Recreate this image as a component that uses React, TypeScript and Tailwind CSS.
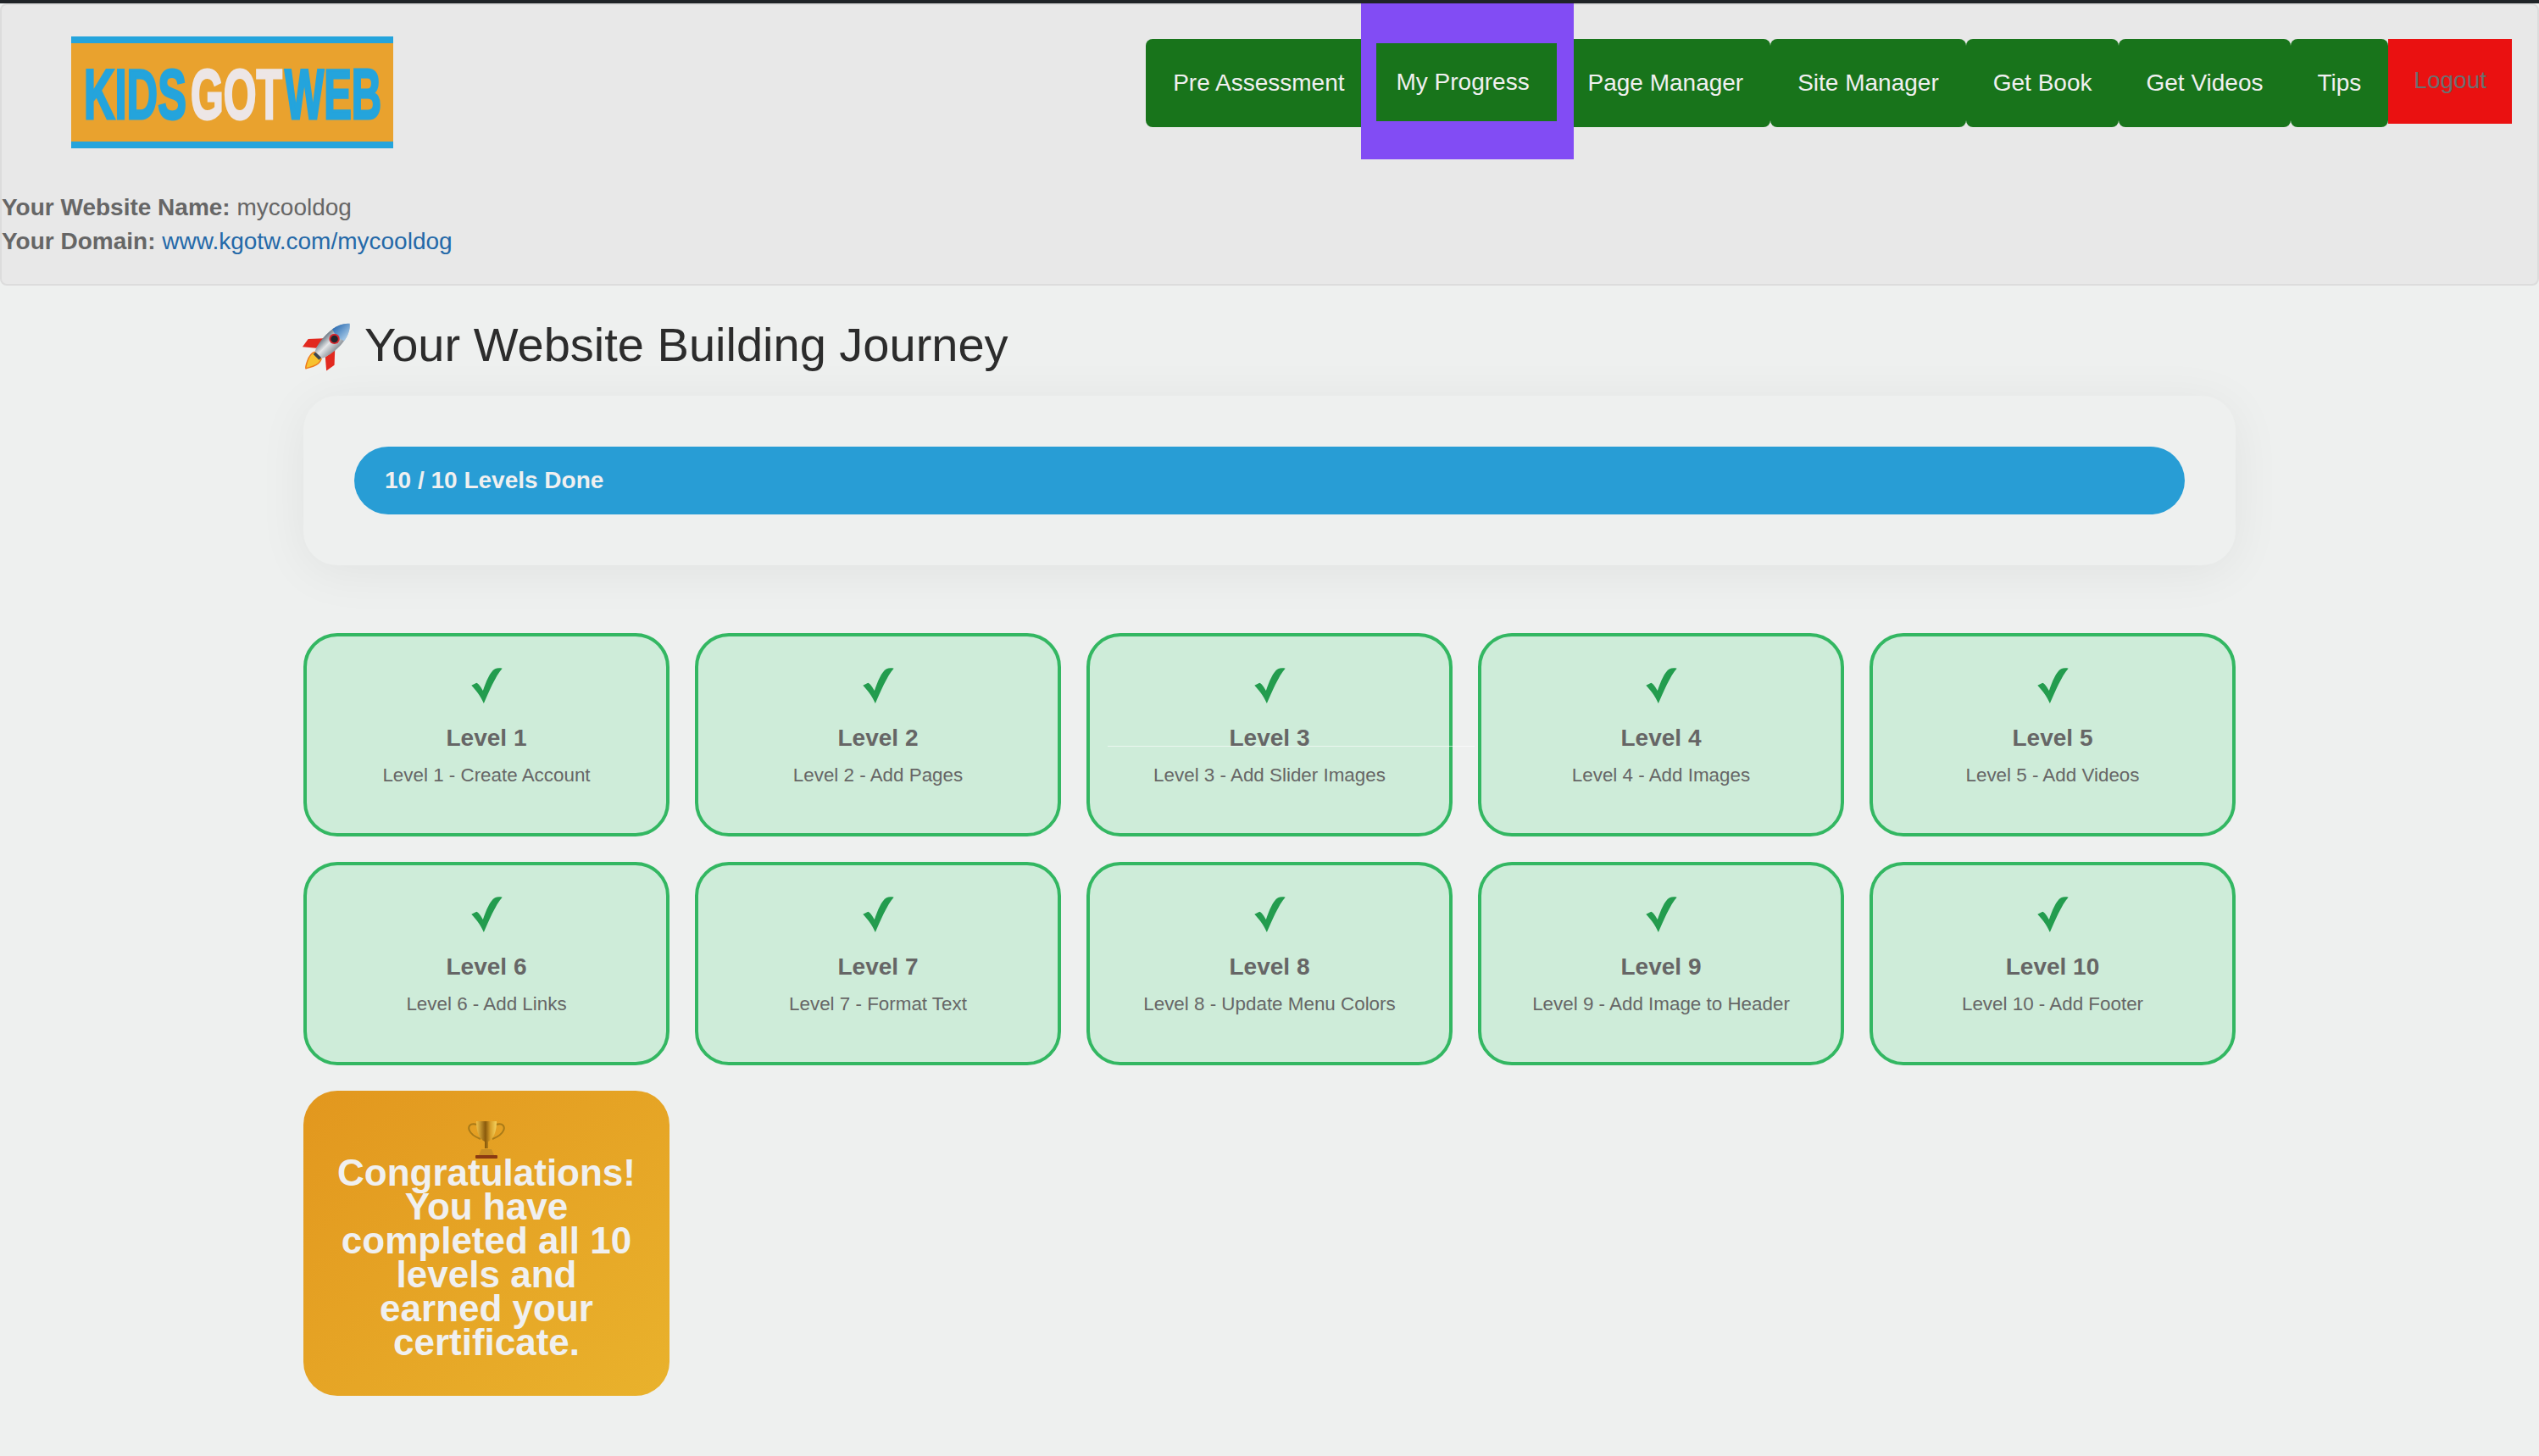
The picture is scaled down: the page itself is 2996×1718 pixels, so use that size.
import React from 'react';

const levels = [
  'Level 1 - Create Account',
  'Level 2 - Add Pages',
  'Level 3 - Add Slider Images',
  'Level 4 - Add Images',
  'Level 5 - Add Videos',
  'Level 6 - Add Links',
  'Level 7 - Format Text',
  'Level 8 - Update Menu Colors',
  'Level 9 - Add Image to Header',
  'Level 10 - Add Footer',
];

const Logo = () => (
  <svg width="380" height="132" viewBox="0 0 380 132" className="block">
    <rect width="380" height="132" fill="#e9a22e" />
    <rect width="380" height="8" fill="#24a4dc" />
    <rect y="124" width="380" height="8" fill="#24a4dc" />
    <g fontFamily="'Liberation Sans', sans-serif" fontWeight="700" fontSize="83" strokeWidth="3">
      <text transform="translate(15 97) scale(0.61 1)" fill="#24a4dc" stroke="#24a4dc">KIDS</text>
      <text transform="translate(141 97) scale(0.6 1)" fill="#ede6e6" stroke="#ede6e6">GOT</text>
      <text transform="translate(252 97) scale(0.59 1)" fill="#24a4dc" stroke="#24a4dc">WEB</text>
    </g>
  </svg>
);

const Rocket = () => (
  <svg width="57" height="56" viewBox="0 0 57 56" className="shrink-0 overflow-visible">
    <defs>
      <linearGradient id="rocketBody" x1="0" y1="0" x2="1" y2="0">
        <stop offset="0" stopColor="#6f7b86" />
        <stop offset="0.45" stopColor="#e4e6e8" />
        <stop offset="1" stopColor="#8c939a" />
      </linearGradient>
      <linearGradient id="rocketNose" x1="0" y1="0" x2="1" y2="0">
        <stop offset="0" stopColor="#2f6fb3" />
        <stop offset="1" stopColor="#a8cbe8" />
      </linearGradient>
    </defs>
    <g transform="translate(28.5 28) rotate(45) scale(0.95) translate(-28 -33)">
      <path d="M22 50 C18 58 28 72 29 72 C32 66 38 58 34 50 Z" fill="#f7c22f" stroke="#ee7a1c" strokeWidth="1.5" />
      <path d="M18 30 L5 44 L7 56 L20 45 Z" fill="#e2291f" />
      <path d="M38 30 L51 44 L49 56 L36 45 Z" fill="#e2291f" />
      <path d="M28 -6 C38 2 41 20 38 36 C37 43 35 47 34 49 L22 49 C21 47 19 43 18 36 C15 20 18 2 28 -6 Z" fill="url(#rocketBody)" />
      <path d="M28 -6 C34 -1 37 6 38.5 14 C32 17 24 17 17.5 14 C19 6 22 -1 28 -6 Z" fill="url(#rocketNose)" />
      <circle cx="28" cy="21" r="6.5" fill="#d8262c" />
      <circle cx="28" cy="21" r="4.5" fill="#23262c" />
      <rect x="23" y="49" width="10" height="4" fill="#3c4650" />
    </g>
  </svg>
);

const Trophy = () => (
  <svg width="44" height="46" viewBox="0 0 44 46" className="block">
    <defs>
      <linearGradient id="cupGold" x1="0" y1="0" x2="1" y2="0">
        <stop offset="0" stopColor="#f0c24a" />
        <stop offset="0.45" stopColor="#8a5a0c" />
        <stop offset="0.7" stopColor="#d9a02a" />
        <stop offset="1" stopColor="#f5d25e" />
      </linearGradient>
    </defs>
    <path d="M11 5 C2 2 0 8 2 12 C4 17 10 20 15 22" fill="none" stroke="#a87a18" strokeWidth="2" />
    <path d="M33 5 C42 2 44 8 42 12 C40 17 34 20 29 22" fill="none" stroke="#a87a18" strokeWidth="2" />
    <path d="M10 1 L34 1 C34 12 31 22 24 25 L24 33 L20 33 L20 25 C13 22 10 12 10 1 Z" fill="url(#cupGold)" />
    <path d="M16 34 L28 34 L31 41 L13 41 Z" fill="#c98f24" />
    <rect x="9" y="41" width="26" height="4" rx="1" fill="#8a3a12" />
  </svg>
);

const Check = () => (
  <svg width="37" height="42" viewBox="0 0 110 127" className="block">
    <path d="M0 63 L18 54 C26 56 34 70 41 82 C52 50 66 14 84 4 C92 0 102 1 110 2 C86 28 60 90 44 127 C32 100 14 78 0 63 Z" fill="#239c4e" />
  </svg>
);

const NavLink = ({ label, wide }: { label: string; wide?: boolean }) => (
  <a className={`flex h-[104px] items-center rounded-lg bg-[#18741b] pl-[32px] text-[#f0f0f0] ${wide ? 'pr-[34px]' : 'pr-[32px]'}`}>{label}</a>
);

export default function App() {
  return (
    <div className="min-h-[1718px] bg-[#eef0ef] font-['Liberation_Sans',Arial,sans-serif] text-[28px] leading-[40px] text-[#666666]">
      <div className="h-[4px] bg-[#1f2327]" />

      <header className="rounded-lg border-2 border-[#dcdcdc] bg-[#e8e8e8] pb-[30px]">
        <div className="flex items-start justify-between pr-[30px]">
          <div className="ml-[82px] mt-[37px]">
            <Logo />
          </div>
          <nav className="mt-[40px] flex items-start">
            <NavLink label="Pre Assessment" wide />
            <div className="relative z-10 -mx-[15px] -mt-[42px] h-[184px] w-[251px] bg-[#824cf4] pl-[18px] pt-[47px]">
              <a className="flex h-[92px] w-[213px] items-center bg-[#18741b] pl-[24px] text-[#f0f0f0]">My Progress</a>
            </div>
            <NavLink label="Page Manager" />
            <NavLink label="Site Manager" />
            <NavLink label="Get Book" />
            <NavLink label="Get Videos" />
            <NavLink label="Tips" />
            <a className="flex h-[100px] items-center bg-[#ea1111] px-[30px] pb-[2px] text-[#6b7070]">Logout</a>
          </nav>
        </div>
        <div className="mt-[37px]">
          <div><b>Your Website Name:</b> mycooldog</div>
          <div><b>Your Domain:</b> <a className="text-[#2469a8]">www.kgotw.com/mycooldog</a></div>
        </div>
      </header>

      <main className="mx-auto w-[2280px] pb-[72px] pt-[40px]">
        <h1 className="flex h-[62px] items-center gap-[15px] text-[56px] font-normal leading-[62px] text-[#2c2c2c]">
          <Rocket />
          <span className="-translate-y-[1px]">Your Website Building Journey</span>
        </h1>

        <section className="mt-[28px] rounded-[40px] bg-[#eef0ef] p-[60px] shadow-[0_8px_60px_rgba(0,0,0,0.06)]">
          <div className="flex h-[80px] items-center rounded-[40px] bg-[#289dd5] pl-[36px] font-bold text-[#f0f0f0]">
            10 / 10 Levels Done
          </div>
        </section>

        <section className="mt-[80px] grid grid-cols-5 gap-[30px]">
          {levels.map((desc, i) => (
            <div key={desc} className="relative flex h-[240px] flex-col items-center rounded-[40px] border-4 border-[#33b762] bg-[#ceecd9] pt-[37px] text-center">
              <Check />
              <div className="mt-[21px] font-bold">Level {i + 1}</div>
              <div className="mt-[8px] text-[22.4px] leading-[32px]">{desc}</div>
              {i === 2 && <div className="absolute left-[21px] top-[129px] h-[1px] w-[433px] bg-white/60" />}
            </div>
          ))}
          <div className="flex h-[360px] flex-col items-center rounded-[40px] bg-gradient-to-br from-[#e2971e] to-[#e9b22c] px-[36px] pt-[35px] text-center text-[44px] font-bold leading-[40px] text-[#f0f0f0]">
            <Trophy />
            <div className="-mt-[4px] w-[360px]">Congratulations! You have completed all 10 levels and earned your certificate.</div>
          </div>
        </section>
      </main>
    </div>
  );
}
